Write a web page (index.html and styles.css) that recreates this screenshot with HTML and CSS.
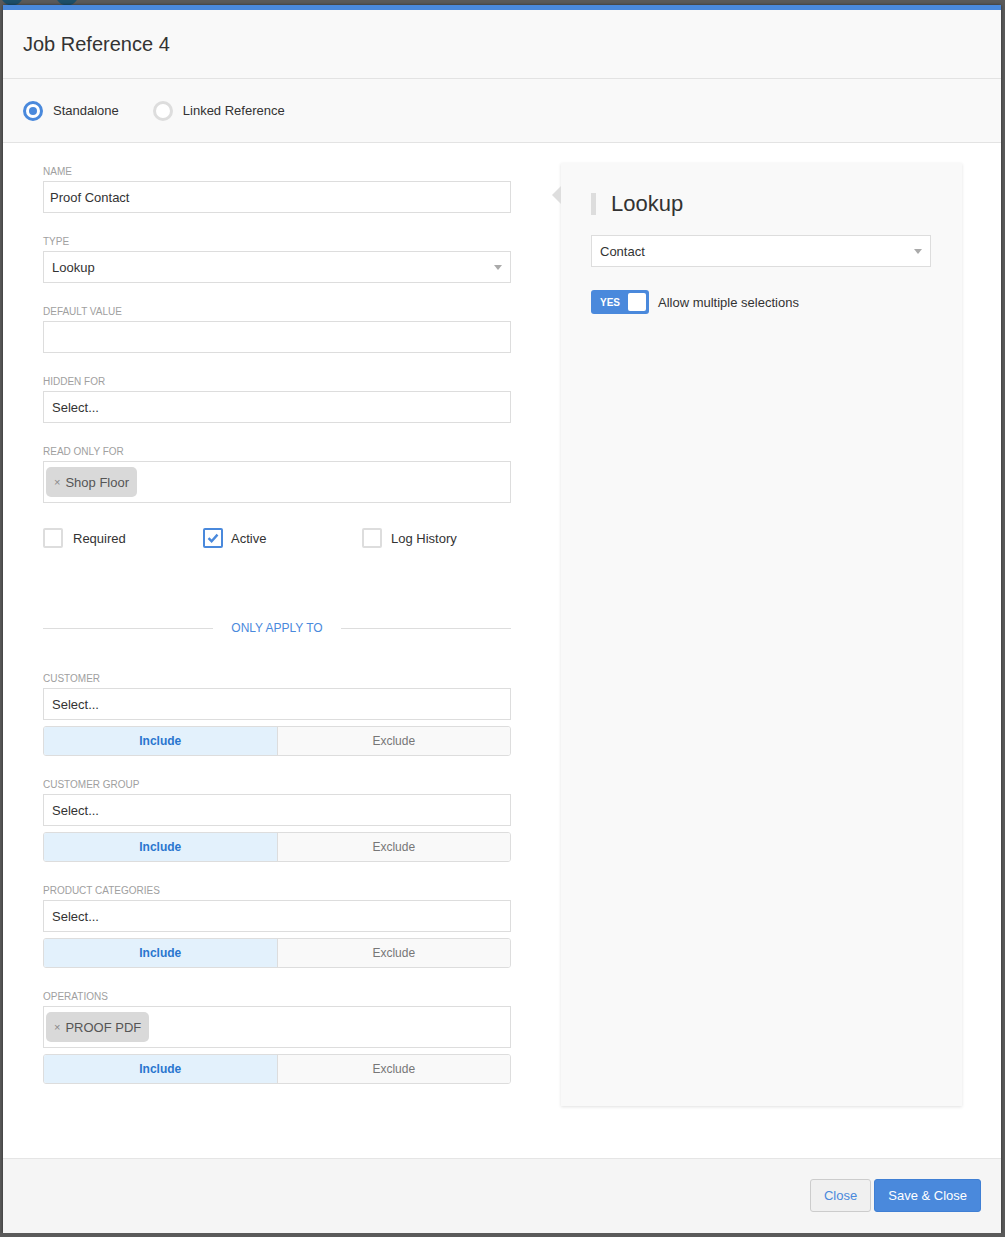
FILE: index.html
```html
<!DOCTYPE html>
<html>
<head>
<meta charset="utf-8">
<title>Job Reference 4</title>
<link rel="stylesheet" href="styles.css">
</head>
<body>
<div class="modal">
  <div class="modal-header">
    <h1 class="modal-title">Job Reference 4</h1>
  </div>
  <div class="mode-row">
    <label class="radio checked"><span class="radio-circle"></span><span>Standalone</span></label>
    <label class="radio"><span class="radio-circle"></span><span>Linked Reference</span></label>
  </div>
  <div class="modal-body">
    <div class="form-col">
      <div class="field">
        <div class="field-label">Name</div>
        <div class="input">Proof Contact</div>
      </div>
      <div class="field">
        <div class="field-label">Type</div>
        <div class="input select">Lookup<span class="caret"></span></div>
      </div>
      <div class="field">
        <div class="field-label">Default Value</div>
        <div class="input"></div>
      </div>
      <div class="field">
        <div class="field-label">Hidden For</div>
        <div class="input select-like">Select...</div>
      </div>
      <div class="field">
        <div class="field-label">Read Only For</div>
        <div class="tag-box"><span class="tag"><span class="tag-x">×</span>Shop Floor</span></div>
      </div>
      <div class="checks">
        <label class="check"><span class="check-box"></span><span>Required</span></label>
        <label class="check checked tight"><span class="check-box"><svg width="12" height="10" viewBox="0 0 12 10"><path d="M1.5 5.2 L4.6 8.2 L10.5 1.6" fill="none" stroke="#4a89dc" stroke-width="2.4"/></svg></span><span>Active</span></label>
        <label class="check tight log"><span class="check-box"></span><span>Log History</span></label>
      </div>
      <div class="divider"><span class="divider-line"></span><span class="divider-text">ONLY APPLY TO</span><span class="divider-line"></span></div>
      <div class="field">
        <div class="field-label">Customer</div>
        <div class="input select-like">Select...</div>
        <div class="seg"><span class="seg-btn active">Include</span><span class="seg-btn">Exclude</span></div>
      </div>
      <div class="field">
        <div class="field-label">Customer Group</div>
        <div class="input select-like">Select...</div>
        <div class="seg"><span class="seg-btn active">Include</span><span class="seg-btn">Exclude</span></div>
      </div>
      <div class="field">
        <div class="field-label">Product Categories</div>
        <div class="input select-like">Select...</div>
        <div class="seg"><span class="seg-btn active">Include</span><span class="seg-btn">Exclude</span></div>
      </div>
      <div class="field">
        <div class="field-label">Operations</div>
        <div class="tag-box"><span class="tag"><span class="tag-x">×</span>PROOF PDF</span></div>
        <div class="seg"><span class="seg-btn active">Include</span><span class="seg-btn">Exclude</span></div>
      </div>
    </div>
    <div class="side-panel">
      <span class="panel-arrow"></span>
      <div class="panel-title"><span class="panel-bar"></span><span>Lookup</span></div>
      <div class="input select panel-select">Contact<span class="caret"></span></div>
      <div class="toggle-row">
        <span class="toggle"><span class="toggle-text">YES</span><span class="toggle-knob"></span></span>
        <span>Allow multiple selections</span>
      </div>
    </div>
  </div>
  <div class="modal-footer">
    <button class="btn btn-default">Close</button>
    <button class="btn btn-primary">Save &amp; Close</button>
  </div>
</div>
</body>
</html>
```
FILE: styles.css
```css
html {
  background-color: #5a5a5a;
  background-image:
    radial-gradient(circle at 12px -6px, #1d4f69 0, #1d4f69 11px, transparent 12px),
    radial-gradient(circle at 67px -6px, #1d4f69 0, #1d4f69 11px, transparent 12px);
  background-repeat: no-repeat;
}
body {
  margin: 0;
  font-family: "Liberation Sans", Arial, sans-serif;
  font-size: 13px;
  color: #333;
}
.modal {
  margin: 5px 0 0 3px;
  width: 998px;
  background: #fff;
  border-top: 5px solid #4a89dc;
  box-shadow: 0 0 3px rgba(0,0,0,0.5);
}
.modal-header {
  height: 69px;
  box-sizing: border-box;
  background: #f9f9f9;
  border-bottom: 1px solid #e3e3e3;
  padding-left: 20px;
  display: flex;
  align-items: center;
}
.modal-title {
  margin: 0;
  font-size: 20px;
  font-weight: normal;
  color: #333;
}
.mode-row {
  height: 64px;
  box-sizing: border-box;
  background: #f9f9f9;
  border-bottom: 1px solid #e3e3e3;
  padding-left: 20px;
  display: flex;
  align-items: center;
  gap: 34px;
}
.radio {
  display: flex;
  align-items: center;
  gap: 10px;
  font-size: 13px;
  color: #333;
}
.radio-circle {
  width: 20px;
  height: 20px;
  box-sizing: border-box;
  border: 3px solid #ddd;
  border-radius: 50%;
  background: #fff;
  display: flex;
  align-items: center;
  justify-content: center;
}
.radio.checked .radio-circle {
  border-color: #4a89dc;
}
.radio.checked .radio-circle::after {
  content: "";
  width: 8px;
  height: 8px;
  border-radius: 50%;
  background: #4a89dc;
}
.modal-body {
  display: grid;
  grid-template-columns: 468px 401px;
  column-gap: 50px;
  padding: 20px 39px 52px 40px;
}
.form-col {
  padding-top: 2px;
}
.field {
  margin-bottom: 22px;
}
.field-label {
  font-size: 10px;
  line-height: 13px;
  height: 13px;
  color: #a0a0a0;
  text-transform: uppercase;
  margin-bottom: 3px;
}
.input {
  height: 32px;
  box-sizing: border-box;
  border: 1px solid #ddd;
  background: #fff;
  padding: 0 6px;
  display: flex;
  align-items: center;
  font-size: 13px;
  color: #333;
  position: relative;
}
.select, .select-like {
  padding-left: 8px;
}
.caret {
  position: absolute;
  right: 8px;
  top: 13px;
  width: 0;
  height: 0;
  border-left: 4px solid transparent;
  border-right: 4px solid transparent;
  border-top: 5px solid #aaa;
}
.tag-box {
  height: 42px;
  box-sizing: border-box;
  border: 1px solid #ddd;
  background: #fff;
  padding: 5px 2px;
  display: flex;
}
.tag {
  height: 30px;
  box-sizing: border-box;
  background: #d9d9d9;
  border-radius: 5px;
  padding: 0 8px;
  display: flex;
  align-items: center;
  font-size: 13px;
  color: #555;
}
.tag-x {
  font-size: 11px;
  color: #888;
  margin-right: 5px;
}
.checks {
  display: grid;
  grid-template-columns: 160px 159px 1fr;
  margin-top: 25px;
  height: 20px;
}
.check {
  display: flex;
  align-items: center;
  gap: 10px;
  font-size: 13px;
  color: #333;
}
.check.tight {
  gap: 8px;
}
.check.log {
  gap: 9px;
}
.check-box {
  width: 20px;
  height: 20px;
  box-sizing: border-box;
  border: 2px solid #ddd;
  border-radius: 2px;
  background: #fff;
  display: flex;
  align-items: center;
  justify-content: center;
}
.check.checked .check-box {
  border-color: #4a89dc;
}
.divider {
  display: flex;
  align-items: center;
  margin-top: 73px;
  margin-bottom: 37px;
  height: 14px;
}
.divider-line {
  flex: 1;
  height: 1px;
  background: #ddd;
}
.divider-text {
  padding: 0 18px;
  font-size: 12px;
  line-height: 14px;
  color: #4a89dc;
}
.seg {
  margin-top: 6px;
  height: 30px;
  box-sizing: border-box;
  border: 1px solid #ddd;
  border-radius: 3px;
  display: flex;
  overflow: hidden;
}
.seg-btn {
  flex: 1;
  display: flex;
  align-items: center;
  justify-content: center;
  font-size: 12px;
  color: #777;
  background: #f9f9f9;
}
.seg-btn.active {
  background: #e3f1fc;
  color: #2a76cf;
  font-weight: bold;
  border-right: 1px solid #ddd;
}
.side-panel {
  position: relative;
  background: #f9f9f9;
  box-shadow: 0 1px 3px rgba(0,0,0,0.12);
  padding: 30px 30px;
}
.panel-arrow {
  position: absolute;
  left: -9px;
  top: 23px;
  width: 0;
  height: 0;
  border-top: 9px solid transparent;
  border-bottom: 9px solid transparent;
  border-right: 9px solid #dedede;
}
.panel-title {
  display: flex;
  align-items: center;
  height: 22px;
  font-size: 22px;
  line-height: 22px;
  color: #333;
}
.panel-bar {
  width: 5px;
  height: 22px;
  background: #ddd;
  margin-right: 15px;
}
.panel-select {
  margin-top: 20px;
  width: 340px;
}
.toggle-row {
  margin-top: 23px;
  display: flex;
  align-items: center;
  gap: 9px;
  font-size: 13px;
  color: #333;
}
.toggle {
  width: 58px;
  height: 24px;
  box-sizing: border-box;
  background: #4a89dc;
  border-radius: 3px;
  display: flex;
  align-items: center;
  justify-content: space-between;
  padding: 0 3px 0 9px;
}
.toggle-text {
  color: #fff;
  font-size: 10px;
  font-weight: bold;
}
.toggle-knob {
  width: 18px;
  height: 18px;
  background: #fff;
  border-radius: 2px;
}
.modal-footer {
  height: 75px;
  box-sizing: border-box;
  background: #f5f5f5;
  border-top: 1px solid #e5e5e5;
  padding: 20px 20px 0 0;
  display: flex;
  justify-content: flex-end;
  align-items: flex-start;
  gap: 3px;
}
.btn {
  height: 33px;
  padding: 0 13px;
  font-family: "Liberation Sans", Arial, sans-serif;
  font-size: 13px;
  border-radius: 3px;
  cursor: pointer;
}
.btn-default {
  background: #f0f0f0;
  border: 1px solid #ccc;
  color: #4a89dc;
}
.btn-primary {
  background: #4a89dc;
  border: 1px solid #3f7fd4;
  color: #fff;
}
```
